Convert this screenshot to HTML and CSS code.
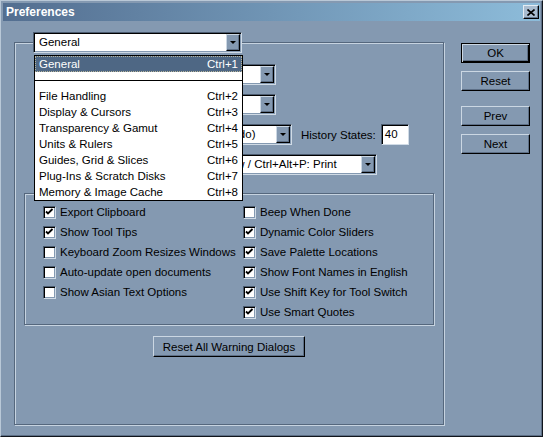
FILE: index.html
```html
<!DOCTYPE html>
<html lang="en">
  <head>
    <meta charset="UTF-8" />
    <title>Preferences</title>
    <link rel="stylesheet" href="styles.css">
  </head>
  <body>
    <div class="window">
      <div class="titlebar">
        <span class="title">Preferences</span>
        <span class="close">
          <svg width="8" height="7" viewBox="0 0 8 7"><path d="M0.5 0.5 L7.5 6.5 M7.5 0.5 L0.5 6.5" stroke="#000" stroke-width="1.6" /></svg>
        </span>
      </div>

      <div class="client">
        <div class="group outer">
          <div class="page-select">
            <div class="select head">
              <span class="value">General</span>
              <span class="arrow"><i></i></span>
            </div>
            <ul class="dropdown">
              <li class="active"><span>General</span><span>Ctrl+1</span></li>
              <li class="sep"></li>
              <li><span>File Handling</span><span>Ctrl+2</span></li>
              <li><span>Display &amp; Cursors</span><span>Ctrl+3</span></li>
              <li><span>Transparency &amp; Gamut</span><span>Ctrl+4</span></li>
              <li><span>Units &amp; Rulers</span><span>Ctrl+5</span></li>
              <li><span>Guides, Grid &amp; Slices</span><span>Ctrl+6</span></li>
              <li><span>Plug-Ins &amp; Scratch Disks</span><span>Ctrl+7</span></li>
              <li><span>Memory &amp; Image Cache</span><span>Ctrl+8</span></li>
            </ul>
          </div>

          <div class="fields">
            <div class="field">
              <label>Color Picker:</label>
              <div class="select w170"><span class="value">Adobe</span><span class="arrow"><i></i></span></div>
            </div>
            <div class="field">
              <label>Interpolation:</label>
              <div class="select w170"><span class="value">Bicubic (Better)</span><span class="arrow"><i></i></span></div>
            </div>
            <div class="field">
              <label>Redo Key:</label>
              <div class="select w186"><span class="value">Ctrl+Z (Toggles Undo/Redo)</span><span class="arrow"><i></i></span></div>
              <span class="history">History States:</span>
              <span class="input">40</span>
            </div>
            <div class="field">
              <label>Print Keys:</label>
              <div class="select w271"><span class="value">Ctrl+P: Print With Preview / Ctrl+Alt+P: Print</span><span class="arrow"><i></i></span></div>
            </div>
          </div>

          <div class="group options">
            <div class="checks">
              <div class="check on"><span class="box"></span>Export Clipboard</div>
              <div class="check"><span class="box"></span>Beep When Done</div>
              <div class="check on"><span class="box"></span>Show Tool Tips</div>
              <div class="check on"><span class="box"></span>Dynamic Color Sliders</div>
              <div class="check"><span class="box"></span>Keyboard Zoom Resizes Windows</div>
              <div class="check on"><span class="box"></span>Save Palette Locations</div>
              <div class="check"><span class="box"></span>Auto-update open documents</div>
              <div class="check on"><span class="box"></span>Show Font Names in English</div>
              <div class="check"><span class="box"></span>Show Asian Text Options</div>
              <div class="check on"><span class="box"></span>Use Shift Key for Tool Switch</div>
              <div></div>
              <div class="check on"><span class="box"></span>Use Smart Quotes</div>
            </div>
          </div>

          <button class="btn wide">Reset All Warning Dialogs</button>
        </div>

        <div class="side">
          <button class="btn default">OK</button>
          <button class="btn">Reset</button>
          <button class="btn spaced">Prev</button>
          <button class="btn">Next</button>
        </div>
      </div>
    </div>
  </body>
</html>
```

FILE: styles.css
```css
* {
  box-sizing: border-box;
}

body {
  margin: 0;
  background: #8499b1;
  font-family: "Liberation Sans", Arial, sans-serif;
  font-size: 11.5px;
  color: #000;
}

.window {
  width: 543px;
  height: 437px;
  padding: 2px;
  border: 1px solid;
  border-color: #b9c8d7 #10151c #10151c #b9c8d7;
  box-shadow: inset -1px -1px 0 #5d6f86;
  display: flex;
  flex-direction: column;
}

/* title bar */
.titlebar {
  height: 18px;
  display: flex;
  align-items: center;
  justify-content: space-between;
  padding: 0 1px 0 3px;
  background: linear-gradient(to right, #536e90, #8dbcda);
}

.title {
  color: #fff;
  font-weight: bold;
  font-size: 12px;
}

.close {
  width: 16px;
  height: 14px;
  display: flex;
  align-items: center;
  justify-content: center;
  background: #a9bccf;
  border: 1px solid;
  border-color: #e4ecf3 #000 #000 #e4ecf3;
  box-shadow: inset -1px -1px 0 #64778e;
}

/* client area */
.client {
  flex: 1;
  display: flex;
  padding: 21px 0 0 11px;
}

.group {
  border: 1px solid #55677d;
  box-shadow: inset 1px 1px 0 #c6d3e0, 1px 1px 0 #c6d3e0;
}

.outer {
  width: 430px;
  height: 383px;
  display: flex;
  flex-direction: column;
}

.page-select {
  position: relative;
  width: 209px;
  margin: -11px 0 0 18px;
}

/* combo boxes */
.select {
  height: 21px;
  display: flex;
  background: #fff;
  border: 1px solid;
  border-color: #4b5b6f #d0dbe6 #d0dbe6 #4b5b6f;
  box-shadow: inset 1px 1px 0 #000, inset -1px -1px 0 #8499b1;
  overflow: hidden;
}

.select .value {
  flex: 1;
  padding: 0 0 0 5px;
  line-height: 19px;
  white-space: nowrap;
  overflow: hidden;
}

.arrow {
  width: 14px;
  margin: 1px 1px 1px 0;
  display: flex;
  align-items: center;
  justify-content: center;
  background: #8499b1;
  border: 1px solid;
  border-color: #cbd7e3 #000 #000 #cbd7e3;
  box-shadow: inset -1px -1px 0 #5d6f86;
}

.arrow i {
  width: 0;
  height: 0;
  border-left: 3px solid transparent;
  border-right: 3px solid transparent;
  border-top: 3px solid #000;
}

.w170 { width: 170px; }
.w186 { width: 186px; }
.w271 { width: 271px; }

/* open list */
.dropdown {
  position: absolute;
  left: 1px;
  top: 23px;
  width: 209px;
  margin: 0;
  padding: 0;
  list-style: none;
  background: #fff;
  border: 1px solid #000;
  z-index: 2;
}

.dropdown li {
  height: 16px;
  line-height: 16px;
  padding: 0 4px;
  display: flex;
  justify-content: space-between;
}

.dropdown li.active {
  background: #4e6784;
  color: #fff;
  border: 1px dotted #b8b49a;
  line-height: 14px;
  padding: 0 3px;
}

.dropdown li.sep {
  position: relative;
}

.dropdown li.sep:after {
  content: "";
  position: absolute;
  left: 0;
  right: 0;
  top: 8px;
  border-top: 1px solid #000;
}

/* general fields */
.fields {
  margin-top: 11px;
  padding-left: 16px;
  display: flex;
  flex-direction: column;
  gap: 9px;
}

.field {
  display: flex;
  align-items: center;
}

.field label {
  width: 75px;
  padding-right: 4px;
  text-align: right;
  white-space: nowrap;
}

.history {
  margin-left: 9px;
}

.input {
  width: 28px;
  height: 21px;
  margin-left: 5px;
  padding-left: 3px;
  line-height: 19px;
  background: #fff;
  border: 1px solid;
  border-color: #4b5b6f #d0dbe6 #d0dbe6 #4b5b6f;
  box-shadow: inset 1px 1px 0 #000;
}

/* options box */
.options {
  height: 132px;
  margin: 18px 9px 0 9px;
  padding: 8px 0 0 18px;
}

.checks {
  display: grid;
  grid-template-columns: 200px auto;
  grid-auto-rows: 20px;
}

.check {
  display: flex;
  align-items: center;
  gap: 4px;
  white-space: nowrap;
}

.box {
  width: 13px;
  height: 13px;
  flex: none;
  background: #fff;
  border: 1px solid;
  border-color: #4b5b6f #d0dbe6 #d0dbe6 #4b5b6f;
  box-shadow: inset 1px 1px 0 #000, inset -1px -1px 0 #8499b1;
}

.check.on .box {
  background: #fff url("data:image/svg+xml,%3Csvg xmlns='http://www.w3.org/2000/svg' width='11' height='11'%3E%3Cpath d='M2 4.5 L4 6.5 L8.5 2' fill='none' stroke='%23000' stroke-width='1.8'/%3E%3C/svg%3E") no-repeat 0 0;
}

/* buttons */
.btn {
  height: 20px;
  padding: 0;
  font: inherit;
  color: #000;
  background: #8499b1;
  border: 1px solid;
  border-color: #cbd7e3 #000 #000 #cbd7e3;
  box-shadow: inset -1px -1px 0 #5d6f86;
}

.btn.default {
  border-color: #000;
  box-shadow: inset 1px 1px 0 #cbd7e3, inset -1px -1px 0 #000, inset -2px -2px 0 #5d6f86;
}

.wide {
  align-self: center;
  width: 152px;
  height: 21px;
  margin-top: 11px;
}

.side {
  margin-left: 17px;
  padding-top: 1px;
  display: flex;
  flex-direction: column;
  gap: 8px;
}

.side .btn {
  width: 69px;
}

.side .spaced {
  margin-top: 7px;
}
```
